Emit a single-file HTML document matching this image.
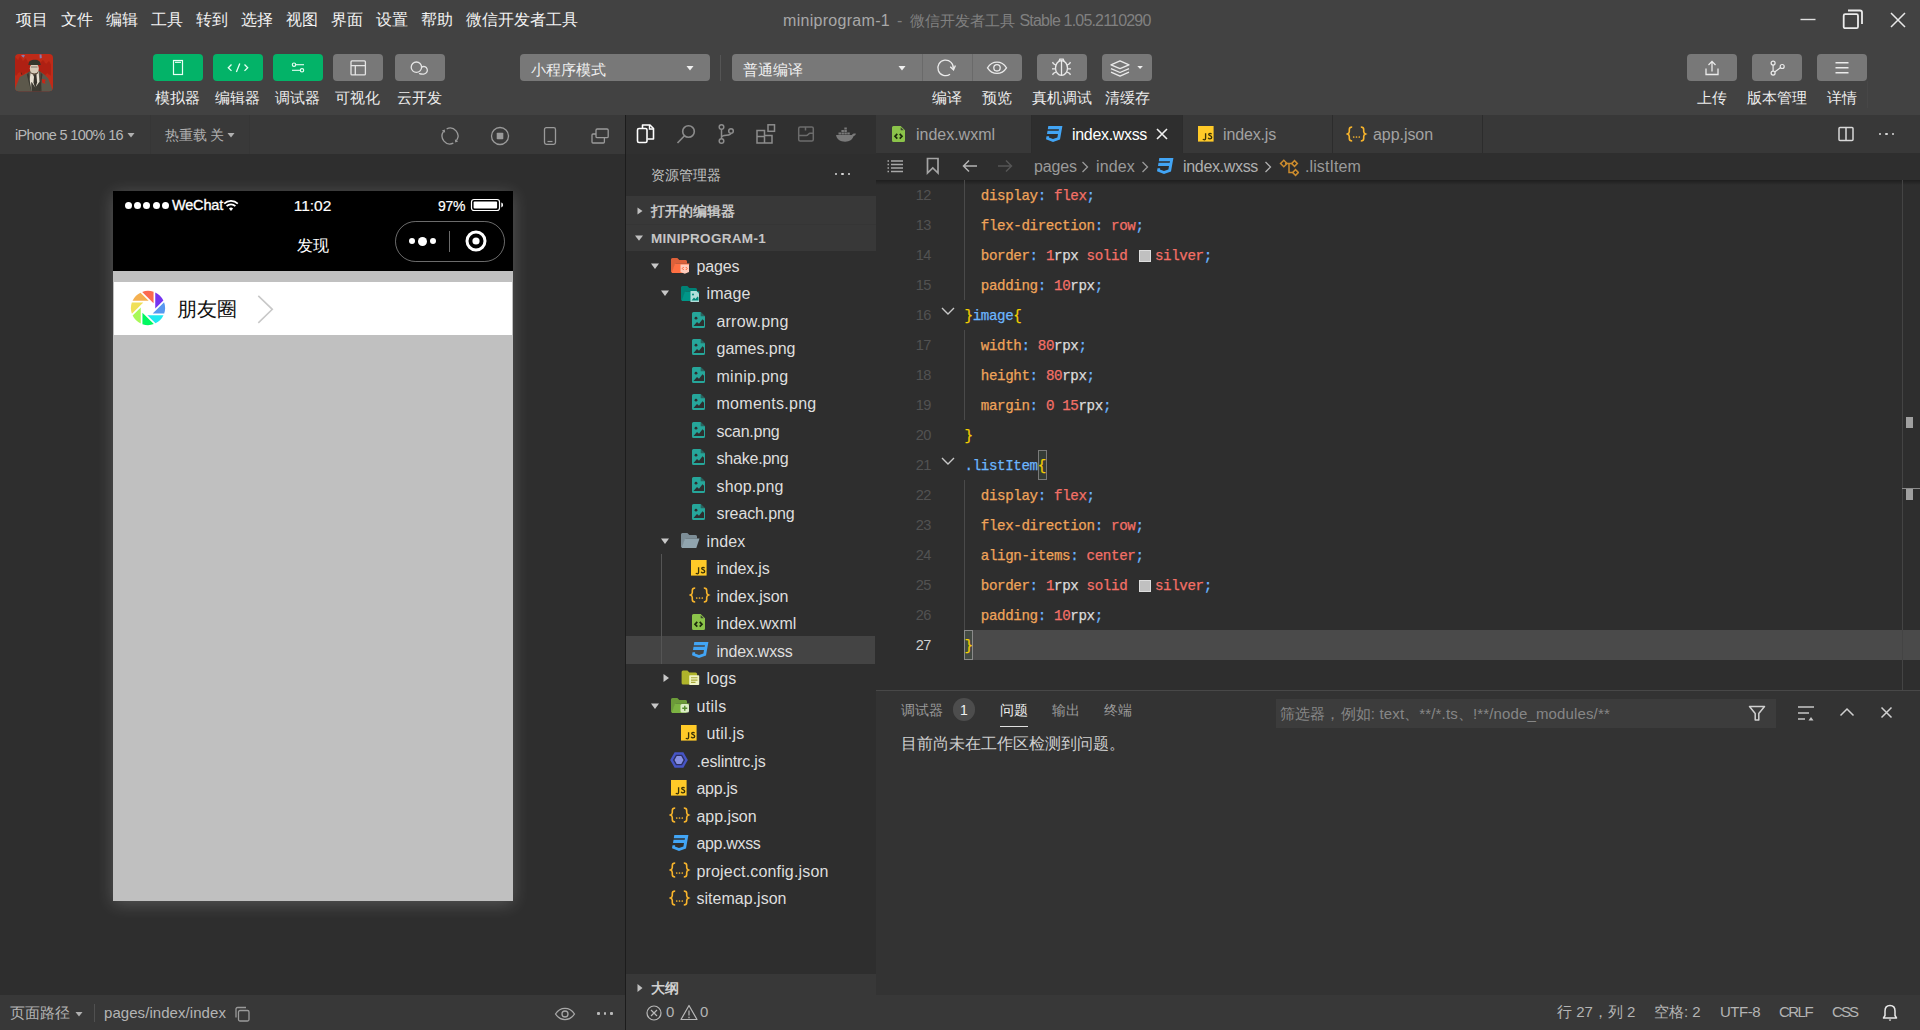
<!DOCTYPE html>
<html><head><meta charset="utf-8"><title>miniprogram-1</title>
<style>
html,body{margin:0;padding:0;}
body{width:1920px;height:1030px;overflow:hidden;background:#2e2e2e;position:relative;font-family:"Liberation Sans",sans-serif;}
.r{position:absolute;display:block;}
.t{position:absolute;white-space:nowrap;}
.m{font-family:"Liberation Mono",monospace;}
.c{transform:translateX(-50%);}
</style></head><body>
<div class="r" style="left:0px;top:0px;width:1920px;height:115px;background:#424242;"></div>
<div class="r" style="left:0px;top:115px;width:625px;height:39px;background:#393939;"></div>
<div class="r" style="left:0px;top:154px;width:625px;height:841px;background:#2e2e2e;"></div>
<div class="r" style="left:626px;top:115px;width:250px;height:880px;background:#2e2e2e;"></div>
<div class="r" style="left:626px;top:115px;width:250px;height:38.5px;background:#303030;"></div>
<div class="r" style="left:625px;top:115px;width:1.4px;height:915px;background:#1c1c1c;"></div>
<div class="r" style="left:876px;top:115px;width:1044px;height:38px;background:#383838;"></div>
<div class="r" style="left:876px;top:153px;width:1044px;height:27px;background:#2e2e2e;"></div>
<div class="r" style="left:876px;top:180px;width:1044px;height:510px;background:#2e2e2e;"></div>
<div class="r" style="left:876px;top:690px;width:1044px;height:305px;background:#333333;"></div>
<div class="r" style="left:0px;top:995px;width:1920px;height:35px;background:#383838;"></div>
<div class="r" style="left:625px;top:115px;width:1.4px;height:915px;background:#1c1c1c;"></div>
<div class="t " style="left:16px;top:9.00px;height:22px;line-height:22px;font-size:15.6px;color:#f2f2f2;">项目</div>
<div class="t " style="left:61px;top:9.00px;height:22px;line-height:22px;font-size:15.6px;color:#f2f2f2;">文件</div>
<div class="t " style="left:106px;top:9.00px;height:22px;line-height:22px;font-size:15.6px;color:#f2f2f2;">编辑</div>
<div class="t " style="left:151px;top:9.00px;height:22px;line-height:22px;font-size:15.6px;color:#f2f2f2;">工具</div>
<div class="t " style="left:196px;top:9.00px;height:22px;line-height:22px;font-size:15.6px;color:#f2f2f2;">转到</div>
<div class="t " style="left:241px;top:9.00px;height:22px;line-height:22px;font-size:15.6px;color:#f2f2f2;">选择</div>
<div class="t " style="left:286px;top:9.00px;height:22px;line-height:22px;font-size:15.6px;color:#f2f2f2;">视图</div>
<div class="t " style="left:331px;top:9.00px;height:22px;line-height:22px;font-size:15.6px;color:#f2f2f2;">界面</div>
<div class="t " style="left:376px;top:9.00px;height:22px;line-height:22px;font-size:15.6px;color:#f2f2f2;">设置</div>
<div class="t " style="left:421px;top:9.00px;height:22px;line-height:22px;font-size:15.6px;color:#f2f2f2;">帮助</div>
<div class="t " style="left:466px;top:9.00px;height:22px;line-height:22px;font-size:15.6px;color:#f2f2f2;">微信开发者工具</div>
<div class="t " style="left:783px;top:9.50px;height:22px;line-height:22px;font-size:16px;color:#a8a8a8;letter-spacing:0.297px;">miniprogram-1</div>
<div class="t " style="left:897px;top:9.50px;height:22px;line-height:22px;font-size:16px;color:#808080;">-</div>
<div class="t " style="left:910px;top:10.30px;height:21px;line-height:21px;font-size:15px;color:#808080;">微信开发者工具</div>
<div class="t " style="left:1019.5px;top:9.50px;height:22px;line-height:22px;font-size:16px;color:#808080;letter-spacing:-0.816px;">Stable 1.05.2110290</div>
<svg class="r" style="left:1796px;top:8px;" width="24" height="24" viewBox="0 0 24 24"><path d="M4.5 11.5H19.5" stroke="#e0e0e0" stroke-width="1.4" fill="none"/></svg>
<svg class="r" style="left:1839px;top:5px;" width="28" height="28" viewBox="0 0 28 28"><rect x="4.700" y="9.200" width="14.300" height="14" rx="1.500" fill="none" stroke="#ececec" stroke-width="1.800"/><path d="M9 5.500h12a2 2 0 0 1 2 2v11.500" fill="none" stroke="#ececec" stroke-width="1.800"/></svg>
<svg class="r" style="left:1885.8px;top:7.5px;" width="24" height="24" viewBox="0 0 24 24"><path d="M5 5L19 19M19 5L5 19" stroke="#e8e8e8" stroke-width="1.5" fill="none"/></svg>
<div class="r" style="left:1867px;top:81px;width:1px;height:27px;background:#474747;"></div>
<svg class="r" style="left:15px;top:54px;" width="38" height="38" viewBox="0 0 38 38"><defs><clipPath id="av"><rect width="38" height="37.300" rx="4"/></clipPath>
<filter id="avb" x="-10%" y="-10%" width="120%" height="120%"><feGaussianBlur stdDeviation=".45"/></filter></defs>
<g clip-path="url(#av)"><rect width="38" height="38" fill="#bf2a18"/>
<g filter="url(#avb)">
<path d="M0 3l3 3 2-4 3 5 3-3 2 4 3-2 3 3 3-4 3 4 3-3 3 4 3-3 2 3v12l-4-3-3 4-4-5-3 3-4-4-3 5-4-4-3 3-4-3-3 4-2-3z" fill="#a8200f" opacity=".7"/>
<path d="M6 1.500l2-.8 2 .5-1.500 2.500zM24.500 .5h2l.3 3.500-2 .5z" fill="#7a8fd0" opacity=".8"/>
<path d="M-2 42l2.300-8 4.500-11 6.500-3.600 4.500-2.600 8 0 5.500 3.600 4 4 3.700 10 2.500 7.600z" fill="#5c594b"/>
<path d="M6.500 18l.8 2.500-.9.300z" fill="#2a2018"/>
<path d="M15.800 17l3.800 7 4-7 .8 11-2.800 10h-4.800l-2.200-12z" fill="#e6dfd0"/>
<path d="M19.200 20.600h2.200l.7 8-1.800 6-1.800-6z" fill="#35322a"/>
<path d="M17 28.500l3.300 5 3.600-5 2.300-1 .5 14.500h-10.200l-.3-14z" fill="#3c3a30"/>
<path d="M15.300 16.500l-3.500 4 4.200 16.500-2.500-19zM24 16.500l3.500 4-2.800 16.500 1-19z" fill="#3a3830"/>
<ellipse cx="19.300" cy="14.600" rx="4.500" ry="5.300" fill="#d6cbb8"/>
<path d="M15 17.200c2 3 6.500 3 8.500 0l-.6 2.200-3.600 1.200-3.700-1.200z" fill="#5a4838"/>
<path d="M16 12.400h6.500v1.200h-6.500z" fill="#4a4238" opacity=".5"/>
<path d="M13.600 9.800c0-5.500 11.900-5.500 11.900 0l.3 1.200h-12.500z" fill="#35342c"/>
<path d="M26.800 25l4.200.8-1.200 1.800.8 2.200-3.300-.8z" fill="#c82818"/>
</g></g></svg>
<div class="r" style="left:153px;top:54px;width:50px;height:27px;background:#03b368;border-radius:4px;"></div>
<svg class="r" style="left:153px;top:54px;" width="50" height="27" viewBox="0 0 50 27"><rect x="20.5" y="6.5" width="9" height="14" fill="none" stroke="#e8fff4" stroke-width="1.2"/><path d="M22 8.3h6" stroke="#e8fff4" stroke-width="1.2"/></svg>
<div class="t c" style="left:177.4px;top:87.00px;height:21px;line-height:21px;font-size:15px;color:#ededed;">模拟器</div>
<div class="r" style="left:213px;top:54px;width:50px;height:27px;background:#03b368;border-radius:4px;"></div>
<svg class="r" style="left:213px;top:54px;" width="50" height="27" viewBox="0 0 50 27"><path d="M18.5 10.5l-3.2 3.2 3.2 3.2M31.5 10.5l3.2 3.2-3.2 3.2M26.8 9.5l-3.4 8.4" fill="none" stroke="#e8fff4" stroke-width="1.3"/></svg>
<div class="t c" style="left:237.4px;top:87.00px;height:21px;line-height:21px;font-size:15px;color:#ededed;">编辑器</div>
<div class="r" style="left:273px;top:54px;width:50px;height:27px;background:#03b368;border-radius:4px;"></div>
<svg class="r" style="left:273px;top:54px;" width="50" height="27" viewBox="0 0 50 27"><circle cx="21" cy="10.7" r="1.7" fill="none" stroke="#e8fff4" stroke-width="1.1"/><path d="M22.7 10.7H31" stroke="#e8fff4" stroke-width="1.1"/><circle cx="29" cy="16.3" r="1.7" fill="none" stroke="#e8fff4" stroke-width="1.1"/><path d="M19 16.3h8.3" stroke="#e8fff4" stroke-width="1.1"/></svg>
<div class="t c" style="left:297.4px;top:87.00px;height:21px;line-height:21px;font-size:15px;color:#ededed;">调试器</div>
<div class="r" style="left:333px;top:54px;width:50px;height:27px;background:#787878;border-radius:4px;"></div>
<svg class="r" style="left:333px;top:54px;" width="50" height="27" viewBox="0 0 50 27"><rect x="18" y="6.900" width="14.400" height="14" rx="1" fill="none" stroke="#e4e4e4" stroke-width="1.3"/><path d="M18 11.600h14.400M22.300 11.600v9.300" stroke="#e4e4e4" stroke-width="1.3"/></svg>
<div class="t c" style="left:357.4px;top:87.00px;height:21px;line-height:21px;font-size:15px;color:#ededed;">可视化</div>
<div class="r" style="left:395px;top:54px;width:50px;height:27px;background:#787878;border-radius:4px;"></div>
<svg class="r" style="left:395px;top:54px;" width="50" height="27" viewBox="0 0 50 27"><circle cx="21.400" cy="13.200" r="5.200" fill="none" stroke="#e4e4e4" stroke-width="1.3"/><path d="M24.500 19.600c1.200.5 2.400.6 4.200.5a3.800 3.800 0 1 0-2.200-7" fill="none" stroke="#e4e4e4" stroke-width="1.3" stroke-linecap="round"/></svg>
<div class="t c" style="left:419.4px;top:87.00px;height:21px;line-height:21px;font-size:15px;color:#ededed;">云开发</div>
<div class="r" style="left:520px;top:54px;width:190px;height:27px;background:#787878;border-radius:4px;"></div>
<div class="t " style="left:530.5px;top:58.80px;height:21px;line-height:21px;font-size:15px;color:#efefef;">小程序模式</div>
<svg class="r" style="left:684px;top:63px;" width="12" height="10" viewBox="0 0 12 10"><path d="M2.5 3h7L6 7.5z" fill="#f0f0f0"/></svg>
<div class="r" style="left:720px;top:55px;width:1px;height:26px;background:#555;"></div>
<div class="r" style="left:732px;top:54px;width:290px;height:27px;background:#787878;border-radius:4px;"></div>
<div class="r" style="left:922px;top:54px;width:1px;height:27px;background:#6a6a6a;"></div>
<div class="r" style="left:972px;top:54px;width:1px;height:27px;background:#6a6a6a;"></div>
<div class="t " style="left:742.5px;top:58.80px;height:21px;line-height:21px;font-size:15px;color:#efefef;">普通编译</div>
<svg class="r" style="left:896px;top:63px;" width="12" height="10" viewBox="0 0 12 10"><path d="M2.5 3h7L6 7.5z" fill="#f0f0f0"/></svg>
<svg class="r" style="left:922px;top:54px;" width="50" height="27" viewBox="0 0 50 27"><path d="M28.050 20.250A7.750 7.750 0 1 1 31.300 14.800" fill="none" stroke="#eaeaea" stroke-width="1.3"/><path d="M28.200 12.800L31.500 15.800 33.400 11.500" fill="none" stroke="#eaeaea" stroke-width="1.3"/></svg>
<svg class="r" style="left:972px;top:54px;" width="50" height="27" viewBox="0 0 50 27"><path d="M15.5 13.8c2.6-4 6-5.6 9.5-5.6s6.900 1.600 9.500 5.600c-2.600 4-6 5.600-9.500 5.600s-6.900-1.600-9.500-5.600z" fill="none" stroke="#eaeaea" stroke-width="1.3"/><circle cx="25" cy="13.800" r="3.200" fill="none" stroke="#eaeaea" stroke-width="1.3"/></svg>
<div class="t c" style="left:947px;top:87.00px;height:21px;line-height:21px;font-size:15px;color:#ededed;">编译</div>
<div class="t c" style="left:997px;top:87.00px;height:21px;line-height:21px;font-size:15px;color:#ededed;">预览</div>
<div class="r" style="left:1037px;top:54px;width:50px;height:27px;background:#787878;border-radius:4px;"></div>
<svg class="r" style="left:1037px;top:54px;" width="50" height="27" viewBox="0 0 50 27"><ellipse cx="24.500" cy="14" rx="6" ry="7.400" fill="none" stroke="#eaeaea" stroke-width="1.3"/><path d="M24.500 6.800v14.400M21.900 7.400l.9-2.200h3.400l.9 2.200M19 11.200l-2.700-1.600-.7-1.500M30 11.200l2.700-1.600.7-1.500M18.500 14.800H15M30.500 14.800H34M19 18l-2.700 1.400-.7 1.500M30 18l2.700 1.400.7 1.500" fill="none" stroke="#eaeaea" stroke-width="1.3"/></svg>
<div class="t c" style="left:1062px;top:87.00px;height:21px;line-height:21px;font-size:15px;color:#ededed;">真机调试</div>
<div class="r" style="left:1102px;top:54px;width:50px;height:27px;background:#787878;border-radius:4px;"></div>
<svg class="r" style="left:1102px;top:54px;" width="50" height="27" viewBox="0 0 50 27"><path d="M18 6.900l-9 3.900 9 3.900 9-3.900zM9 14.600l9 3.900 9-3.900M9 18.200l9 3.900 9-3.900" fill="none" stroke="#eaeaea" stroke-width="1.3" stroke-linejoin="round"/><path d="M35.300 12h5.600l-2.800 3z" fill="#f0f0f0"/></svg>
<div class="t c" style="left:1127px;top:87.00px;height:21px;line-height:21px;font-size:15px;color:#ededed;">清缓存</div>
<div class="r" style="left:1687px;top:54px;width:50px;height:27px;background:#787878;border-radius:4px;"></div>
<svg class="r" style="left:1687px;top:54px;" width="50" height="27" viewBox="0 0 50 27"><path d="M25 17.500V7.500M21.500 11l3.500-3.600 3.500 3.600M19 14.500v6h12v-6" fill="none" stroke="#eaeaea" stroke-width="1.3"/></svg>
<div class="t c" style="left:1712px;top:87.00px;height:21px;line-height:21px;font-size:15px;color:#ededed;">上传</div>
<div class="r" style="left:1752px;top:54px;width:50px;height:27px;background:#787878;border-radius:4px;"></div>
<svg class="r" style="left:1752px;top:54px;" width="50" height="27" viewBox="0 0 50 27"><circle cx="21.100" cy="9.100" r="2" fill="none" stroke="#eaeaea" stroke-width="1.200"/><circle cx="21.100" cy="19.100" r="2" fill="none" stroke="#eaeaea" stroke-width="1.200"/><circle cx="30.200" cy="12.500" r="2" fill="none" stroke="#eaeaea" stroke-width="1.200"/><path d="M21.100 11.100v6M22.700 17.900l5.900-4.300" fill="none" stroke="#eaeaea" stroke-width="1.200"/></svg>
<div class="t c" style="left:1777px;top:87.00px;height:21px;line-height:21px;font-size:15px;color:#ededed;">版本管理</div>
<div class="r" style="left:1817px;top:54px;width:50px;height:27px;background:#787878;border-radius:4px;"></div>
<svg class="r" style="left:1817px;top:54px;" width="50" height="27" viewBox="0 0 50 27"><path d="M18.500 8.800h13M18.500 13.800h13M18.500 18.800h13" stroke="#eaeaea" stroke-width="1.4"/></svg>
<div class="t c" style="left:1842px;top:87.00px;height:21px;line-height:21px;font-size:15px;color:#ededed;">详情</div>
<div class="t " style="left:15px;top:125.00px;height:20px;line-height:20px;font-size:14.5px;color:#b8b8b8;letter-spacing:-0.657px;">iPhone 5 100% 16</div>
<svg class="r" style="left:126px;top:131px;" width="10" height="8" viewBox="0 0 10 8"><path d="M1.500 2h7L5 6.500z" fill="#b0b0b0"/></svg>
<div class="r" style="left:150px;top:115px;width:1px;height:39px;background:#363636;"></div>
<div class="t " style="left:165px;top:125.50px;height:19px;line-height:19px;font-size:13.8px;color:#b0b0b0;">热重载</div>
<div class="t " style="left:210px;top:125.50px;height:19px;line-height:19px;font-size:13.8px;color:#b0b0b0;">关</div>
<svg class="r" style="left:226px;top:131px;" width="10" height="8" viewBox="0 0 10 8"><path d="M1.500 2h7L5 6.500z" fill="#b0b0b0"/></svg>
<div class="r" style="left:249px;top:115px;width:1px;height:39px;background:#363636;"></div>
<svg class="r" style="left:438.1px;top:124.1px;" width="24" height="24" viewBox="0 0 24 24"><path d="M8.660 4.840A7.900 7.900 0 0 1 18.470 16.530M15.340 19.160A7.900 7.900 0 0 1 5.530 7.470" fill="none" stroke="#9a9a9a" stroke-width="1.3"/><path d="M17.200 18.500L20.100 17.500 16.900 15.300zM6.800 5.500L3.900 6.500 7.100 8.700z" fill="#9a9a9a"/></svg>
<svg class="r" style="left:488px;top:124px;" width="24" height="24" viewBox="0 0 24 24"><circle cx="12" cy="12" r="8.500" fill="none" stroke="#9a9a9a" stroke-width="1.3"/><rect x="8.700" y="8.700" width="6.600" height="6.600" rx=".8" fill="#9a9a9a"/></svg>
<svg class="r" style="left:538px;top:124px;" width="24" height="24" viewBox="0 0 24 24"><rect x="6.500" y="3.700" width="11" height="16.600" rx="1.800" fill="none" stroke="#9a9a9a" stroke-width="1.3"/><path d="M9.500 17.500h5" stroke="#9a9a9a" stroke-width="1.2"/></svg>
<svg class="r" style="left:588px;top:124px;" width="24" height="24" viewBox="0 0 24 24"><rect x="8" y="5" width="12.200" height="8.700" rx="1.200" fill="none" stroke="#9a9a9a" stroke-width="1.3"/><path d="M8 10h-3a1 1 0 0 0-1 1v7a1 1 0 0 0 1 1h10.400a1 1 0 0 0 1-1v-4.300" fill="none" stroke="#9a9a9a" stroke-width="1.3"/></svg>
<div class="r" style="left:113px;top:191px;width:400px;height:710px;background:#000;box-shadow:0 3px 16px rgba(255,255,255,.2);"></div>
<div class="r" style="left:113px;top:191px;width:400px;height:80px;background:#000;"></div>
<div class="r" style="left:113px;top:271px;width:400px;height:630px;background:#c0c0c0;"></div>
<div class="r" style="left:125.0px;top:201.5px;width:7px;height:7px;background:#fff;border-radius:50%;"></div>
<div class="r" style="left:134.2px;top:201.5px;width:7px;height:7px;background:#fff;border-radius:50%;"></div>
<div class="r" style="left:143.4px;top:201.5px;width:7px;height:7px;background:#fff;border-radius:50%;"></div>
<div class="r" style="left:152.6px;top:201.5px;width:7px;height:7px;background:#fff;border-radius:50%;"></div>
<div class="r" style="left:161.8px;top:201.5px;width:7px;height:7px;background:#fff;border-radius:50%;"></div>
<div class="t " style="left:172px;top:195.00px;height:20px;line-height:20px;font-size:14.5px;color:#fff;letter-spacing:-0.186px;-webkit-text-stroke:.3px #fff;">WeChat</div>
<svg class="r" style="left:223px;top:198px;" width="16" height="14" viewBox="0 0 16 14"><path d="M1.200 5.600a9.600 9.600 0 0 1 13.600 0" fill="none" stroke="#fff" stroke-width="1.700"/><path d="M3.600 8.200a6.200 6.200 0 0 1 8.800 0" fill="none" stroke="#fff" stroke-width="1.700"/><path d="M5.900 10.600a3 3 0 0 1 4.200 0L8 12.900z" fill="#fff"/></svg>
<div class="t c" style="left:312.5px;top:194.50px;height:22px;line-height:22px;font-size:15.5px;color:#fff;-webkit-text-stroke:.2px #fff;">11:02</div>
<div class="t " style="left:438px;top:196.00px;height:20px;line-height:20px;font-size:14px;color:#fff;letter-spacing:-0.340px;-webkit-text-stroke:.2px #fff;">97%</div>
<svg class="r" style="left:470px;top:198px;" width="36" height="15" viewBox="0 0 36 15"><rect x="1.500" y="1.500" width="28" height="11" rx="2.500" fill="none" stroke="#fff" stroke-width="1.200"/><rect x="3.600" y="3.600" width="23.500" height="6.800" rx="1" fill="#fff"/><path d="M31.300 4.600a2.500 2.500 0 0 1 0 4.800z" fill="#fff"/></svg>
<div class="t c" style="left:312.5px;top:234.50px;height:22px;line-height:22px;font-size:16px;color:#fff;">发现</div>
<div class="r" style="left:395px;top:221px;width:108px;height:39px;background:transparent;border:1px solid rgba(255,255,255,.42);border-radius:21px;"></div>
<div class="r" style="left:409px;top:238px;width:6px;height:6px;background:#fff;border-radius:50%;"></div>
<div class="r" style="left:418px;top:236.5px;width:9px;height:9px;background:#fff;border-radius:50%;"></div>
<div class="r" style="left:430px;top:238px;width:6px;height:6px;background:#fff;border-radius:50%;"></div>
<div class="r" style="left:449px;top:230.5px;width:1px;height:21px;background:rgba(255,255,255,.42);"></div>
<svg class="r" style="left:464.3px;top:229.4px;" width="24" height="24" viewBox="0 0 24 24"><circle cx="12" cy="12" r="9" fill="none" stroke="#fff" stroke-width="3"/><circle cx="12" cy="12" r="3.600" fill="#fff"/></svg>
<div class="r" style="left:114px;top:282px;width:398px;height:53px;background:#fff;"></div>
<svg class="r" style="left:130px;top:290.2px;" width="36" height="36" viewBox="-18 -18 36 36"><path d="M7.25 -15.49A17.1 17.1 0 0 1 15.36 -7.51L7.25 0.60z" fill="#7534f0"/><path d="M16.08 -5.82A17.1 17.1 0 0 1 16.17 5.55L4.70 5.55z" fill="#5898f0"/><path d="M15.49 7.25A17.1 17.1 0 0 1 7.51 15.36L-0.60 7.25z" fill="#20e8f0"/><path d="M5.82 16.08A17.1 17.1 0 0 1 -5.55 16.17L-5.55 4.70z" fill="#00f860"/><path d="M-7.25 15.49A17.1 17.1 0 0 1 -15.36 7.51L-7.25 -0.60z" fill="#a8f858"/><path d="M-16.08 5.82A17.1 17.1 0 0 1 -16.17 -5.55L-4.70 -5.55z" fill="#f0e058"/><path d="M-15.49 -7.25A17.1 17.1 0 0 1 -7.51 -15.36L0.60 -7.25z" fill="#f4b050"/><path d="M-5.82 -16.08A17.1 17.1 0 0 1 5.55 -16.17L5.55 -4.70z" fill="#fb6a50"/></svg>
<div class="t " style="left:176.5px;top:294.60px;height:28px;line-height:28px;font-size:20px;color:#111;">朋友圈</div>
<svg class="r" style="left:255px;top:294px;" width="20" height="31" viewBox="0 0 20 31"><path d="M3.300 1.800L17.300 15.300 3.300 28.800" fill="none" stroke="#c8c8c8" stroke-width="1.600"/></svg>
<svg class="r" style="left:634px;top:122px;" width="24" height="24" viewBox="0 0 24 24"><path d="M8.500 6.500v-3.500h7.500l3.500 3.500v10.500h-6" fill="none" stroke="#fff" stroke-width="1.6" stroke-linejoin="round"/><path d="M15.500 3v4h4" fill="none" stroke="#fff" stroke-width="1.400"/><rect x="3.500" y="6.500" width="9.500" height="14" rx="1.500" fill="none" stroke="#fff" stroke-width="1.6"/></svg>
<svg class="r" style="left:674px;top:122px;" width="24" height="24" viewBox="0 0 24 24"><circle cx="14.500" cy="9.500" r="5.800" fill="none" stroke="#8c8c8c" stroke-width="1.6"/><path d="M10.500 13.700L3.500 21" stroke="#8c8c8c" stroke-width="1.600"/></svg>
<svg class="r" style="left:714px;top:122px;" width="24" height="24" viewBox="0 0 24 24"><circle cx="7.500" cy="5" r="2.300" fill="none" stroke="#8c8c8c" stroke-width="1.500"/><circle cx="7.500" cy="19" r="2.300" fill="none" stroke="#8c8c8c" stroke-width="1.500"/><circle cx="17" cy="9" r="2.300" fill="none" stroke="#8c8c8c" stroke-width="1.500"/><path d="M7.500 7.300v9.400M7.500 15.500c0-3.500 9.500-1 9.500-4.200" fill="none" stroke="#8c8c8c" stroke-width="1.500"/></svg>
<svg class="r" style="left:754px;top:122px;" width="24" height="24" viewBox="0 0 24 24"><path d="M3 8.500h7.500v12.500h-7.500zM10.500 13.500h7.500v7.500h-7.500M3 14.500h7.500" fill="none" stroke="#8c8c8c" stroke-width="1.500"/><rect x="14" y="2.800" width="6.500" height="6.500" fill="none" stroke="#8c8c8c" stroke-width="1.500"/></svg>
<svg class="r" style="left:794px;top:122px;" width="24" height="24" viewBox="0 0 24 24"><rect x="4.700" y="5" width="14.600" height="14" rx="1.500" fill="none" stroke="#6c6c6c" stroke-width="1.500"/><path d="M4.700 13.500h7.500c2 0 2.300-2.300 3.800-2.300h3.300M11.500 5v3.500" fill="none" stroke="#6c6c6c" stroke-width="1.500"/></svg>
<svg class="r" style="left:834px;top:124.5px;" width="24" height="20" viewBox="0 0 28 24"><path d="M2 12h19c1.500-1.800 3-2 5-1.500-.5 1.500-1.500 2.500-3 3-1.500 4-4.500 6.500-10 6.500-6 0-10-2.500-11-8z" fill="#7a7a7a"/><path d="M5 9h3v2.500h-3zM8.500 9h3v2.500h-3zM12 9h3v2.500h-3zM8.500 6h3v2.500h-3zM12 6h3v2.500h-3zM12 3h3v2.500h-3zM15.500 9h3v2.500h-3z" fill="#7a7a7a"/></svg>
<div class="t " style="left:651px;top:165.50px;height:19px;line-height:19px;font-size:13.5px;color:#c4c4c4;">资源管理器</div>
<div class="r" style="left:835.0px;top:172.8px;width:2.4px;height:2.4px;background:#d8d8d8;border-radius:1px;"></div>
<div class="r" style="left:841.3px;top:172.8px;width:2.4px;height:2.4px;background:#d8d8d8;border-radius:1px;"></div>
<div class="r" style="left:847.5999999999999px;top:172.8px;width:2.4px;height:2.4px;background:#d8d8d8;border-radius:1px;"></div>
<div class="r" style="left:626px;top:196px;width:250px;height:55px;background:#383838;"></div>
<div class="r" style="left:626px;top:223.5px;width:250px;height:1px;background:#353535;"></div>
<svg class="r" style="left:634px;top:205px;" width="12" height="12" viewBox="0 0 12 12"><path d="M3.500 2.500L8.500 6 3.500 9.500z" fill="#c0c0c0"/></svg>
<div class="t " style="left:651px;top:201.70px;height:19px;line-height:19px;font-size:13.5px;color:#c6c6c6;font-weight:bold;">打开的编辑器</div>
<svg class="r" style="left:633px;top:232px;" width="12" height="12" viewBox="0 0 12 12"><path d="M2 3.500h8L6 8.800z" fill="#c0c0c0"/></svg>
<div class="t " style="left:651px;top:228.70px;height:19px;line-height:19px;font-size:13.5px;color:#c6c6c6;font-weight:bold;letter-spacing:0.308px;">MINIPROGRAM-1</div>
<div class="r" style="left:626px;top:636px;width:249px;height:28px;background:#444444;"></div>
<div class="r" style="left:661px;top:553.8px;width:1px;height:110.0px;background:#555;"></div>
<svg class="r" style="left:650px;top:260.8px;" width="10" height="10" viewBox="0 0 10 10"><path d="M1 2.500h8L5 8z" fill="#c8c8c8"/></svg>
<svg class="r" style="left:670.5px;top:257.1px;" width="22" height="19" viewBox="0 0 22 19"><path d="M0 2.500a1.500 1.500 0 0 1 1.500-1.500h4.800l2 2h6.200a1.500 1.500 0 0 1 1.500 1.500v2h-11.500l-3 8.500h-1.500z" fill="#ff7043"/><path d="M0 2.500a1.500 1.500 0 0 1 1.500-1.500h4.800l2 2h6.200a1.500 1.500 0 0 1 1.500 1.500v2h-11.500l-3 8.500h-1.500z" fill="#000" opacity=".13"/><path d="M4 6.500h14.500l-3.200 9.500h-14.800z" fill="#ff7043"/><path d="M9.500 7.500h8.500v7.500l-4.200 1.800-4.300-1.800z" fill="#ffccbc"/><path d="M12.700 10l-1.400 1.500 1.400 1.500M14.800 10l1.400 1.500-1.400 1.500" fill="none" stroke="#ff5722" stroke-width=".9"/></svg>
<div class="t " style="left:696.5px;top:255.60px;height:22px;line-height:22px;font-size:16px;color:#dedede;letter-spacing:-0.119px;">pages</div>
<svg class="r" style="left:660px;top:288.3px;" width="10" height="10" viewBox="0 0 10 10"><path d="M1 2.500h8L5 8z" fill="#c8c8c8"/></svg>
<svg class="r" style="left:680.5px;top:284.6px;" width="22" height="19" viewBox="0 0 22 19"><path d="M0 2.500a1.500 1.500 0 0 1 1.500-1.500h4.800l2 2h6.200a1.500 1.500 0 0 1 1.500 1.500v2h-11.500l-3 8.500h-1.500z" fill="#009688"/><path d="M0 2.500a1.500 1.500 0 0 1 1.500-1.500h4.800l2 2h6.200a1.500 1.500 0 0 1 1.500 1.500v2h-11.500l-3 8.500h-1.500z" fill="#000" opacity=".13"/><path d="M4 6.500h14.500l-3.200 9.500h-14.800z" fill="#009688"/><path d="M9.500 6h6l2.500 2.500v8.500h-8.500z" fill="#b2dfdb"/><path d="M10.500 15.500l2.500-3 1.500 1.500 2-2.500 1 1v3z" fill="#00897b"/><circle cx="12" cy="9.500" r="1" fill="#00897b"/></svg>
<div class="t " style="left:706.5px;top:283.10px;height:22px;line-height:22px;font-size:16px;color:#dedede;letter-spacing:0.084px;">image</div>
<svg class="r" style="left:691.9px;top:310.7px;" width="14" height="18" viewBox="0 0 14 18"><path d="M1.500 1h7.200L13 5.300V15.500a1.500 1.500 0 0 1-1.500 1.500h-10A1.500 1.500 0 0 1 0 15.500v-13A1.500 1.500 0 0 1 1.500 1z" fill="#26a69a"/><path d="M8.700 1v4.300H13z" fill="#2e2e2e" opacity=".55"/><circle cx="4" cy="7.200" r="1.400" fill="#2e2e2e"/><path d="M1.500 15l3.500-4 2 1.800 3.500-4.500 1.500 1.500V15z" fill="#2e2e2e"/></svg>
<div class="t " style="left:716.5px;top:310.60px;height:22px;line-height:22px;font-size:16px;color:#dedede;letter-spacing:0.193px;">arrow.png</div>
<svg class="r" style="left:691.9px;top:338.2px;" width="14" height="18" viewBox="0 0 14 18"><path d="M1.500 1h7.200L13 5.300V15.500a1.500 1.500 0 0 1-1.500 1.500h-10A1.500 1.500 0 0 1 0 15.500v-13A1.500 1.500 0 0 1 1.500 1z" fill="#26a69a"/><path d="M8.700 1v4.300H13z" fill="#2e2e2e" opacity=".55"/><circle cx="4" cy="7.200" r="1.400" fill="#2e2e2e"/><path d="M1.500 15l3.500-4 2 1.800 3.500-4.500 1.500 1.500V15z" fill="#2e2e2e"/></svg>
<div class="t " style="left:716.5px;top:338.10px;height:22px;line-height:22px;font-size:16px;color:#dedede;letter-spacing:-0.018px;">games.png</div>
<svg class="r" style="left:691.9px;top:365.7px;" width="14" height="18" viewBox="0 0 14 18"><path d="M1.500 1h7.200L13 5.300V15.500a1.500 1.500 0 0 1-1.500 1.500h-10A1.500 1.500 0 0 1 0 15.500v-13A1.500 1.500 0 0 1 1.500 1z" fill="#26a69a"/><path d="M8.700 1v4.300H13z" fill="#2e2e2e" opacity=".55"/><circle cx="4" cy="7.200" r="1.400" fill="#2e2e2e"/><path d="M1.500 15l3.500-4 2 1.800 3.500-4.500 1.500 1.500V15z" fill="#2e2e2e"/></svg>
<div class="t " style="left:716.5px;top:365.60px;height:22px;line-height:22px;font-size:16px;color:#dedede;letter-spacing:0.292px;">minip.png</div>
<svg class="r" style="left:691.9px;top:393.2px;" width="14" height="18" viewBox="0 0 14 18"><path d="M1.500 1h7.200L13 5.300V15.500a1.500 1.500 0 0 1-1.500 1.500h-10A1.500 1.500 0 0 1 0 15.500v-13A1.500 1.500 0 0 1 1.500 1z" fill="#26a69a"/><path d="M8.700 1v4.300H13z" fill="#2e2e2e" opacity=".55"/><circle cx="4" cy="7.200" r="1.400" fill="#2e2e2e"/><path d="M1.500 15l3.500-4 2 1.800 3.500-4.500 1.500 1.500V15z" fill="#2e2e2e"/></svg>
<div class="t " style="left:716.5px;top:393.10px;height:22px;line-height:22px;font-size:16px;color:#dedede;letter-spacing:0.278px;">moments.png</div>
<svg class="r" style="left:691.9px;top:420.7px;" width="14" height="18" viewBox="0 0 14 18"><path d="M1.500 1h7.200L13 5.300V15.500a1.500 1.500 0 0 1-1.500 1.500h-10A1.500 1.500 0 0 1 0 15.500v-13A1.500 1.500 0 0 1 1.500 1z" fill="#26a69a"/><path d="M8.700 1v4.300H13z" fill="#2e2e2e" opacity=".55"/><circle cx="4" cy="7.200" r="1.400" fill="#2e2e2e"/><path d="M1.500 15l3.500-4 2 1.800 3.500-4.500 1.500 1.500V15z" fill="#2e2e2e"/></svg>
<div class="t " style="left:716.5px;top:420.60px;height:22px;line-height:22px;font-size:16px;color:#dedede;letter-spacing:-0.242px;">scan.png</div>
<svg class="r" style="left:691.9px;top:448.2px;" width="14" height="18" viewBox="0 0 14 18"><path d="M1.500 1h7.200L13 5.300V15.500a1.500 1.500 0 0 1-1.500 1.500h-10A1.500 1.500 0 0 1 0 15.500v-13A1.500 1.500 0 0 1 1.500 1z" fill="#26a69a"/><path d="M8.700 1v4.300H13z" fill="#2e2e2e" opacity=".55"/><circle cx="4" cy="7.200" r="1.400" fill="#2e2e2e"/><path d="M1.500 15l3.500-4 2 1.800 3.500-4.500 1.500 1.500V15z" fill="#2e2e2e"/></svg>
<div class="t " style="left:716.5px;top:448.10px;height:22px;line-height:22px;font-size:16px;color:#dedede;letter-spacing:-0.204px;">shake.png</div>
<svg class="r" style="left:691.9px;top:475.7px;" width="14" height="18" viewBox="0 0 14 18"><path d="M1.500 1h7.200L13 5.300V15.500a1.500 1.500 0 0 1-1.500 1.500h-10A1.500 1.500 0 0 1 0 15.500v-13A1.500 1.500 0 0 1 1.500 1z" fill="#26a69a"/><path d="M8.700 1v4.300H13z" fill="#2e2e2e" opacity=".55"/><circle cx="4" cy="7.200" r="1.400" fill="#2e2e2e"/><path d="M1.500 15l3.500-4 2 1.800 3.500-4.500 1.500 1.500V15z" fill="#2e2e2e"/></svg>
<div class="t " style="left:716.5px;top:475.60px;height:22px;line-height:22px;font-size:16px;color:#dedede;letter-spacing:0.145px;">shop.png</div>
<svg class="r" style="left:691.9px;top:503.19999999999993px;" width="14" height="18" viewBox="0 0 14 18"><path d="M1.500 1h7.200L13 5.300V15.500a1.500 1.500 0 0 1-1.500 1.500h-10A1.500 1.500 0 0 1 0 15.500v-13A1.500 1.500 0 0 1 1.500 1z" fill="#26a69a"/><path d="M8.700 1v4.300H13z" fill="#2e2e2e" opacity=".55"/><circle cx="4" cy="7.200" r="1.400" fill="#2e2e2e"/><path d="M1.500 15l3.500-4 2 1.800 3.500-4.500 1.500 1.500V15z" fill="#2e2e2e"/></svg>
<div class="t " style="left:716.5px;top:503.10px;height:22px;line-height:22px;font-size:16px;color:#dedede;letter-spacing:-0.116px;">sreach.png</div>
<svg class="r" style="left:660px;top:535.8px;" width="10" height="10" viewBox="0 0 10 10"><path d="M1 2.500h8L5 8z" fill="#c8c8c8"/></svg>
<svg class="r" style="left:680.5px;top:532.0999999999999px;" width="22" height="19" viewBox="0 0 22 19"><path d="M0 2.500a1.500 1.500 0 0 1 1.500-1.500h4.800l2 2h6.200a1.500 1.500 0 0 1 1.500 1.500v2h-11.500l-3 8.500h-1.500z" fill="#90a4ae"/><path d="M0 2.500a1.500 1.500 0 0 1 1.500-1.500h4.800l2 2h6.200a1.500 1.500 0 0 1 1.500 1.500v2h-11.500l-3 8.500h-1.500z" fill="#000" opacity=".13"/><path d="M4 6.500h14.500l-3.200 9.500h-14.800z" fill="#90a4ae"/></svg>
<div class="t " style="left:706.5px;top:530.60px;height:22px;line-height:22px;font-size:16px;color:#dedede;letter-spacing:0.150px;">index</div>
<svg class="r" style="left:690.9px;top:559.8px;" width="16" height="16" viewBox="0 0 16 16"><rect x="0" y="0" width="15.600" height="15.600" fill="#ffca28"/><path d="M7.600 7.300v5c0 1-.5 1.500-1.300 1.500-.7 0-1.100-.3-1.400-.8M13.500 8.200c-.3-.6-.8-.9-1.500-.9-.8 0-1.300.4-1.300 1.100 0 1.600 3 1 3 2.900 0 .9-.7 1.500-1.700 1.500-.9 0-1.500-.4-1.800-1.100" fill="none" stroke="#3a3208" stroke-width="1.350"/></svg>
<div class="t " style="left:716.5px;top:558.10px;height:22px;line-height:22px;font-size:16px;color:#dedede;letter-spacing:-0.156px;">index.js</div>
<svg class="r" style="left:688.7px;top:587.0px;" width="22" height="16" viewBox="0 0 22 16"><path d="M6.200 1c-2.200 0-2.900.8-2.900 2.400v2.200c0 1.100-.6 1.900-1.800 2.400 1.200.5 1.800 1.300 1.800 2.400v2.200c0 1.600.7 2.400 2.900 2.400M14.800 1c2.200 0 2.900.8 2.900 2.400v2.200c0 1.100.6 1.900 1.800 2.400-1.200.5-1.800 1.300-1.800 2.400v2.200c0 1.600-.7 2.400-2.900 2.400" fill="none" stroke="#f9b52c" stroke-width="1.600"/><circle cx="7.700" cy="11" r=".85" fill="#f9b52c"/><circle cx="10.500" cy="11" r=".85" fill="#f9b52c"/><circle cx="13.300" cy="11" r=".85" fill="#f9b52c"/></svg>
<div class="t " style="left:716.5px;top:585.60px;height:22px;line-height:22px;font-size:16px;color:#dedede;letter-spacing:-0.005px;">index.json</div>
<svg class="r" style="left:691.9px;top:613.1999999999999px;" width="14" height="18" viewBox="0 0 14 18"><path d="M1.500 1h7.200L13 5.300V15.500a1.500 1.500 0 0 1-1.500 1.500h-10A1.500 1.500 0 0 1 0 15.500v-13A1.500 1.500 0 0 1 1.500 1z" fill="#8bc34a"/><path d="M8.700 2.200v3.100h3.100z" fill="#2e2e2e" opacity=".85"/><path d="M5.300 8.900L3 11.300l2.300 2.400M7.700 8.900L10 11.300l-2.300 2.400" fill="none" stroke="#1c2a0c" stroke-width="1.700"/></svg>
<div class="t " style="left:716.5px;top:613.10px;height:22px;line-height:22px;font-size:16px;color:#dedede;letter-spacing:0.087px;">index.wxml</div>
<svg class="r" style="left:691.5px;top:642.3px;" width="17" height="17" viewBox="0 0 17 17"><path d="M2.300 0H16.400L14 13.500 7 16 0 13.200 .5 10.300H3.200L2.900 11.400 7 13 11.400 11.400 12 8H1L1.500 4.700H12.700L13 3.300H1.800z" fill="#42a5f5"/></svg>
<div class="t " style="left:716.5px;top:640.60px;height:22px;line-height:22px;font-size:16px;color:#dedede;letter-spacing:-0.225px;">index.wxss</div>
<svg class="r" style="left:661px;top:673.3px;" width="10" height="10" viewBox="0 0 10 10"><path d="M2.500 1L8 5 2.500 9z" fill="#c8c8c8"/></svg>
<svg class="r" style="left:680.5px;top:669.5999999999999px;" width="22" height="19" viewBox="0 0 22 19"><path d="M.6 1.900a1.500 1.500 0 0 1 1.500-1.500h4.300l2 2h6.200a1.500 1.500 0 0 1 1.500 1.500v9a1.500 1.500 0 0 1-1.500 1.500h-12.500a1.500 1.500 0 0 1-1.500-1.500z" fill="#afb42b"/><rect x="8.200" y="5.300" width="10" height="9.700" rx=".8" fill="#f0f4c3"/><path d="M10 7.800h6.500M10 10.100h6.500M10 12.400h4.500" stroke="#a8a838" stroke-width="1.100"/></svg>
<div class="t " style="left:706.5px;top:668.10px;height:22px;line-height:22px;font-size:16px;color:#dedede;letter-spacing:0.162px;">logs</div>
<svg class="r" style="left:650px;top:700.8px;" width="10" height="10" viewBox="0 0 10 10"><path d="M1 2.500h8L5 8z" fill="#c8c8c8"/></svg>
<svg class="r" style="left:670.5px;top:697.0999999999999px;" width="22" height="19" viewBox="0 0 22 19"><path d="M0 2.500a1.500 1.500 0 0 1 1.500-1.500h4.800l2 2h6.200a1.500 1.500 0 0 1 1.500 1.500v2h-11.500l-3 8.500h-1.500z" fill="#7cb342"/><path d="M0 2.500a1.500 1.500 0 0 1 1.500-1.500h4.800l2 2h6.200a1.500 1.500 0 0 1 1.500 1.500v2h-11.500l-3 8.500h-1.500z" fill="#000" opacity=".13"/><path d="M4 6.500h14.500l-3.200 9.500h-14.800z" fill="#7cb342"/><rect x="9.500" y="7" width="8.500" height="8.500" rx="1.500" fill="#dcedc8"/><path d="M13.750 8.800v5M11.250 11.300h5" stroke="#558b2f" stroke-width="1.400"/></svg>
<div class="t " style="left:696.5px;top:695.60px;height:22px;line-height:22px;font-size:16px;color:#dedede;letter-spacing:0.309px;">utils</div>
<svg class="r" style="left:680.9px;top:724.8px;" width="16" height="16" viewBox="0 0 16 16"><rect x="0" y="0" width="15.600" height="15.600" fill="#ffca28"/><path d="M7.600 7.300v5c0 1-.5 1.500-1.300 1.500-.7 0-1.100-.3-1.400-.8M13.500 8.200c-.3-.6-.8-.9-1.500-.9-.8 0-1.300.4-1.300 1.100 0 1.600 3 1 3 2.900 0 .9-.7 1.500-1.700 1.500-.9 0-1.500-.4-1.800-1.100" fill="none" stroke="#3a3208" stroke-width="1.350"/></svg>
<div class="t " style="left:706.5px;top:723.10px;height:22px;line-height:22px;font-size:16px;color:#dedede;letter-spacing:0.221px;">util.js</div>
<svg class="r" style="left:669.9px;top:752.3px;" width="19" height="16.5" viewBox="0 0 19 16.5"><polygon points="4.60,0.30 13.40,0.30 17.80,8.00 13.40,15.70 4.60,15.70 0.20,8.00" fill="#4655c6"/><polygon points="5.95,2.65 12.05,2.65 15.10,8.00 12.05,13.35 5.95,13.35 2.90,8.00" fill="#2b2e5e"/><polygon points="6.75,4.05 11.25,4.05 13.50,8.00 11.25,11.95 6.75,11.95 4.50,8.00" fill="#8790e4"/></svg>
<div class="t " style="left:696.5px;top:750.60px;height:22px;line-height:22px;font-size:16px;color:#dedede;letter-spacing:-0.177px;">.eslintrc.js</div>
<svg class="r" style="left:670.9px;top:779.8px;" width="16" height="16" viewBox="0 0 16 16"><rect x="0" y="0" width="15.600" height="15.600" fill="#ffca28"/><path d="M7.600 7.300v5c0 1-.5 1.500-1.300 1.500-.7 0-1.100-.3-1.400-.8M13.500 8.200c-.3-.6-.8-.9-1.500-.9-.8 0-1.300.4-1.300 1.100 0 1.600 3 1 3 2.900 0 .9-.7 1.500-1.700 1.500-.9 0-1.500-.4-1.800-1.100" fill="none" stroke="#3a3208" stroke-width="1.350"/></svg>
<div class="t " style="left:696.5px;top:778.10px;height:22px;line-height:22px;font-size:16px;color:#dedede;letter-spacing:-0.283px;">app.js</div>
<svg class="r" style="left:668.7px;top:807.0px;" width="22" height="16" viewBox="0 0 22 16"><path d="M6.200 1c-2.200 0-2.900.8-2.900 2.400v2.200c0 1.100-.6 1.900-1.800 2.400 1.200.5 1.800 1.300 1.800 2.400v2.200c0 1.600.7 2.400 2.900 2.400M14.800 1c2.200 0 2.900.8 2.900 2.400v2.200c0 1.100.6 1.900 1.800 2.400-1.200.5-1.800 1.300-1.800 2.400v2.200c0 1.600-.7 2.400-2.900 2.400" fill="none" stroke="#f9b52c" stroke-width="1.600"/><circle cx="7.700" cy="11" r=".85" fill="#f9b52c"/><circle cx="10.500" cy="11" r=".85" fill="#f9b52c"/><circle cx="13.300" cy="11" r=".85" fill="#f9b52c"/></svg>
<div class="t " style="left:696.5px;top:805.60px;height:22px;line-height:22px;font-size:16px;color:#dedede;letter-spacing:-0.062px;">app.json</div>
<svg class="r" style="left:671.5px;top:834.8px;" width="17" height="17" viewBox="0 0 17 17"><path d="M2.300 0H16.400L14 13.500 7 16 0 13.200 .5 10.300H3.200L2.900 11.400 7 13 11.400 11.400 12 8H1L1.500 4.700H12.700L13 3.300H1.800z" fill="#42a5f5"/></svg>
<div class="t " style="left:696.5px;top:833.10px;height:22px;line-height:22px;font-size:16px;color:#dedede;letter-spacing:-0.337px;">app.wxss</div>
<svg class="r" style="left:668.7px;top:862.0px;" width="22" height="16" viewBox="0 0 22 16"><path d="M6.200 1c-2.200 0-2.900.8-2.900 2.400v2.200c0 1.100-.6 1.900-1.800 2.400 1.200.5 1.800 1.300 1.800 2.400v2.200c0 1.600.7 2.400 2.900 2.400M14.800 1c2.200 0 2.900.8 2.900 2.400v2.200c0 1.100.6 1.900 1.800 2.400-1.200.5-1.800 1.300-1.800 2.400v2.200c0 1.600-.7 2.400-2.900 2.400" fill="none" stroke="#f9b52c" stroke-width="1.600"/><circle cx="7.700" cy="11" r=".85" fill="#f9b52c"/><circle cx="10.500" cy="11" r=".85" fill="#f9b52c"/><circle cx="13.300" cy="11" r=".85" fill="#f9b52c"/></svg>
<div class="t " style="left:696.5px;top:860.60px;height:22px;line-height:22px;font-size:16px;color:#dedede;letter-spacing:0.160px;">project.config.json</div>
<svg class="r" style="left:668.7px;top:889.5px;" width="22" height="16" viewBox="0 0 22 16"><path d="M6.200 1c-2.200 0-2.900.8-2.900 2.400v2.200c0 1.100-.6 1.900-1.800 2.400 1.200.5 1.800 1.300 1.800 2.400v2.200c0 1.600.7 2.400 2.900 2.400M14.800 1c2.200 0 2.900.8 2.900 2.400v2.200c0 1.100.6 1.900 1.800 2.400-1.200.5-1.800 1.300-1.800 2.400v2.200c0 1.600-.7 2.400-2.900 2.400" fill="none" stroke="#f9b52c" stroke-width="1.600"/><circle cx="7.700" cy="11" r=".85" fill="#f9b52c"/><circle cx="10.500" cy="11" r=".85" fill="#f9b52c"/><circle cx="13.300" cy="11" r=".85" fill="#f9b52c"/></svg>
<div class="t " style="left:696.5px;top:888.10px;height:22px;line-height:22px;font-size:16px;color:#dedede;letter-spacing:0.015px;">sitemap.json</div>
<div class="r" style="left:626px;top:974px;width:250px;height:21px;background:#383838;"></div>
<svg class="r" style="left:634px;top:982px;" width="12" height="12" viewBox="0 0 12 12"><path d="M3.500 2L8.500 6 3.500 10z" fill="#c0c0c0"/></svg>
<div class="t " style="left:651px;top:978.50px;height:19px;line-height:19px;font-size:13.5px;color:#d0d0d0;font-weight:bold;">大纲</div>
<div class="r" style="left:1031px;top:115px;width:152px;height:38px;background:#2e2e2e;"></div>
<div class="r" style="left:1031px;top:115px;width:1px;height:38px;background:#2c2c2c;"></div>
<div class="r" style="left:1182px;top:115px;width:1px;height:38px;background:#2c2c2c;"></div>
<div class="r" style="left:1332px;top:115px;width:1px;height:38px;background:#2c2c2c;"></div>
<div class="r" style="left:1482px;top:115px;width:1px;height:38px;background:#2c2c2c;"></div>
<svg class="r" style="left:892px;top:125px;" width="14" height="18" viewBox="0 0 14 18"><path d="M1.500 1h7.200L13 5.300V15.500a1.500 1.500 0 0 1-1.500 1.500h-10A1.500 1.500 0 0 1 0 15.500v-13A1.500 1.500 0 0 1 1.500 1z" fill="#8bc34a"/><path d="M8.700 2.200v3.100h3.100z" fill="#2e2e2e" opacity=".85"/><path d="M5.300 8.900L3 11.300l2.300 2.400M7.700 8.900L10 11.300l-2.300 2.400" fill="none" stroke="#1c2a0c" stroke-width="1.700"/></svg>
<div class="t " style="left:916px;top:123.50px;height:22px;line-height:22px;font-size:16px;color:#a2a2a2;letter-spacing:-0.013px;">index.wxml</div>
<svg class="r" style="left:1045.8px;top:126px;" width="17" height="17" viewBox="0 0 17 17"><path d="M2.300 0H16.400L14 13.500 7 16 0 13.200 .5 10.300H3.200L2.900 11.400 7 13 11.400 11.400 12 8H1L1.500 4.700H12.700L13 3.300H1.800z" fill="#42a5f5"/></svg>
<div class="t " style="left:1072px;top:123.50px;height:22px;line-height:22px;font-size:16px;color:#ffffff;letter-spacing:-0.325px;">index.wxss</div>
<svg class="r" style="left:1154px;top:126px;" width="16" height="16" viewBox="0 0 16 16"><path d="M3 3l10 10M13 3L3 13" stroke="#f0f0f0" stroke-width="1.600"/></svg>
<svg class="r" style="left:1198px;top:126px;" width="16" height="16" viewBox="0 0 16 16"><rect x="0" y="0" width="15.600" height="15.600" fill="#ffca28"/><path d="M7.600 7.300v5c0 1-.5 1.500-1.300 1.500-.7 0-1.100-.3-1.400-.8M13.500 8.200c-.3-.6-.8-.9-1.500-.9-.8 0-1.300.4-1.300 1.100 0 1.600 3 1 3 2.900 0 .9-.7 1.500-1.700 1.500-.9 0-1.500-.4-1.800-1.100" fill="none" stroke="#3a3208" stroke-width="1.350"/></svg>
<div class="t " style="left:1223px;top:123.50px;height:22px;line-height:22px;font-size:16px;color:#a2a2a2;letter-spacing:-0.156px;">index.js</div>
<svg class="r" style="left:1346px;top:126px;" width="22" height="16" viewBox="0 0 22 16"><path d="M6.200 1c-2.200 0-2.900.8-2.900 2.400v2.200c0 1.100-.6 1.900-1.800 2.400 1.200.5 1.800 1.300 1.800 2.400v2.200c0 1.600.7 2.400 2.900 2.400M14.800 1c2.200 0 2.900.8 2.900 2.400v2.200c0 1.100.6 1.900 1.800 2.400-1.200.5-1.800 1.300-1.800 2.400v2.200c0 1.600-.7 2.400-2.900 2.400" fill="none" stroke="#f9b52c" stroke-width="1.600"/><circle cx="7.700" cy="11" r=".85" fill="#f9b52c"/><circle cx="10.500" cy="11" r=".85" fill="#f9b52c"/><circle cx="13.300" cy="11" r=".85" fill="#f9b52c"/></svg>
<div class="t " style="left:1373px;top:123.50px;height:22px;line-height:22px;font-size:16px;color:#a2a2a2;letter-spacing:-0.062px;">app.json</div>
<svg class="r" style="left:1836px;top:124px;" width="20" height="20" viewBox="0 0 20 20"><rect x="3" y="3.500" width="14" height="13" rx="1" fill="none" stroke="#d8d8d8" stroke-width="1.500"/><path d="M10 3.500v13" stroke="#d8d8d8" stroke-width="1.500"/></svg>
<div class="r" style="left:1879.0px;top:132.8px;width:2.4px;height:2.4px;background:#d8d8d8;border-radius:1px;"></div>
<div class="r" style="left:1885.3px;top:132.8px;width:2.4px;height:2.4px;background:#d8d8d8;border-radius:1px;"></div>
<div class="r" style="left:1891.6px;top:132.8px;width:2.4px;height:2.4px;background:#d8d8d8;border-radius:1px;"></div>
<svg class="r" style="left:886px;top:156.8px;" width="20" height="18" viewBox="0 0 20 18"><path d="M1.500 4h1.500M5 4h12M1.500 7.500h1.500M5 7.500h12M1.500 11h1.500M5 11h12M1.500 14.500h1.500M5 14.500h12" stroke="#a8a8a8" stroke-width="1.500"/></svg>
<svg class="r" style="left:924px;top:155.8px;" width="18" height="20" viewBox="0 0 18 20"><path d="M3.500 2.500h10.500v14.500l-5.250-5-5.250 5z" fill="none" stroke="#a4a4a4" stroke-width="1.700"/></svg>
<svg class="r" style="left:960px;top:157px;" width="20" height="18" viewBox="0 0 20 18"><path d="M17 9H3.500M9 3.500L3.500 9 9 14.500" fill="none" stroke="#b4b4b4" stroke-width="1.500"/></svg>
<svg class="r" style="left:995px;top:157px;" width="20" height="18" viewBox="0 0 20 18"><path d="M3 9h13.500M11 3.500L16.500 9 11 14.500" fill="none" stroke="#555" stroke-width="1.500"/></svg>
<div class="t " style="left:1034px;top:156.10px;height:22px;line-height:22px;font-size:16px;color:#9a9a9a;letter-spacing:-0.119px;">pages</div>
<svg class="r" style="left:1080px;top:160px;" width="10" height="14" viewBox="0 0 10 14"><path d="M2.500 2L7.500 7 2.500 12" fill="none" stroke="#9a9a9a" stroke-width="1.300"/></svg>
<div class="t " style="left:1096px;top:156.10px;height:22px;line-height:22px;font-size:16px;color:#9a9a9a;letter-spacing:0.150px;">index</div>
<svg class="r" style="left:1140px;top:160px;" width="10" height="14" viewBox="0 0 10 14"><path d="M2.500 2L7.500 7 2.500 12" fill="none" stroke="#9a9a9a" stroke-width="1.300"/></svg>
<svg class="r" style="left:1157px;top:157.8px;" width="17" height="17" viewBox="0 0 17 17"><path d="M2.300 0H16.400L14 13.500 7 16 0 13.200 .5 10.300H3.200L2.900 11.400 7 13 11.400 11.400 12 8H1L1.500 4.700H12.700L13 3.300H1.800z" fill="#42a5f5"/></svg>
<div class="t " style="left:1183px;top:156.10px;height:22px;line-height:22px;font-size:16px;color:#b0b0b0;letter-spacing:-0.325px;">index.wxss</div>
<svg class="r" style="left:1263px;top:160px;" width="10" height="14" viewBox="0 0 10 14"><path d="M2.500 2L7.500 7 2.500 12" fill="none" stroke="#b0b0b0" stroke-width="1.300"/></svg>
<svg class="r" style="left:1279px;top:157px;" width="20" height="20" viewBox="0 0 20 20"><path d="M6 6.500h4v9h4.500M10 6.500h3" fill="none" stroke="#cc8c2e" stroke-width="1.500"/><rect x="-2.300" y="-2.300" width="4.600" height="4.600" transform="translate(4.800 6.500) rotate(45)" fill="none" stroke="#cc8c2e" stroke-width="1.500"/><rect x="-2" y="-2" width="4" height="4" transform="translate(15.500 6.500) rotate(45)" fill="none" stroke="#cc8c2e" stroke-width="1.500"/><rect x="-2" y="-2" width="4" height="4" transform="translate(16.500 15.500) rotate(45)" fill="none" stroke="#cc8c2e" stroke-width="1.500"/></svg>
<div class="t " style="left:1305px;top:156.10px;height:22px;line-height:22px;font-size:16px;color:#9a9a9a;letter-spacing:0.098px;">.listItem</div>
<div class="r" style="left:876px;top:180px;width:1044px;height:5px;background:transparent;background:linear-gradient(rgba(0,0,0,.35),rgba(0,0,0,0));"></div>
<div class="r" style="left:964px;top:630px;width:956px;height:30px;background:#4a4a4a;"></div>
<div class="r" style="left:1037.5px;top:450px;width:9.3px;height:30px;background:#353c36;border:1px solid #7a7a7a;box-sizing:border-box;"></div>
<div class="r" style="left:964px;top:630px;width:9.3px;height:30px;background:#434a44;border:1px solid #8a8a8a;box-sizing:border-box;"></div>
<div class="r" style="left:964px;top:180px;width:1px;height:120px;background:#4a4a4a;"></div>
<div class="r" style="left:964px;top:330px;width:1px;height:90px;background:#4a4a4a;"></div>
<div class="r" style="left:964px;top:480px;width:1px;height:150px;background:#4a4a4a;"></div>
<div class="t m" style="left:964.5px;top:185.5px;width:400px;height:20px;line-height:20px;font-size:14.2px;letter-spacing:-0.381px;white-space:pre;-webkit-text-stroke:.25px;"><span style="position:absolute;left:16.28px;top:0;color:#f0a45a">display</span><span style="position:absolute;left:73.26px;top:0;color:#6cb6ff">:</span><span style="position:absolute;left:89.54px;top:0;color:#f47067">flex</span><span style="position:absolute;left:122.10px;top:0;color:#6cb6ff">;</span></div>
<div class="t" style="left:891px;width:40px;text-align:right;top:184.5px;height:20px;line-height:20px;font-size:14.600px;letter-spacing:-.45px;color:#525252;">12</div>
<div class="t m" style="left:964.5px;top:215.5px;width:400px;height:20px;line-height:20px;font-size:14.2px;letter-spacing:-0.381px;white-space:pre;-webkit-text-stroke:.25px;"><span style="position:absolute;left:16.28px;top:0;color:#f0a45a">flex-direction</span><span style="position:absolute;left:130.24px;top:0;color:#6cb6ff">:</span><span style="position:absolute;left:146.52px;top:0;color:#f47067">row</span><span style="position:absolute;left:170.94px;top:0;color:#6cb6ff">;</span></div>
<div class="t" style="left:891px;width:40px;text-align:right;top:214.5px;height:20px;line-height:20px;font-size:14.600px;letter-spacing:-.45px;color:#525252;">13</div>
<div class="t m" style="left:964.5px;top:245.5px;width:400px;height:20px;line-height:20px;font-size:14.2px;letter-spacing:-0.381px;white-space:pre;-webkit-text-stroke:.25px;"><span style="position:absolute;left:16.28px;top:0;color:#f0a45a">border</span><span style="position:absolute;left:65.12px;top:0;color:#6cb6ff">:</span><span style="position:absolute;left:81.40px;top:0;color:#f47067">1</span><span style="position:absolute;left:89.54px;top:0;color:#dcdcdc">rpx</span><span style="position:absolute;left:122.10px;top:0;color:#f47067">solid</span><span style="position:absolute;left:174.94px;top:4.300px;width:11.800px;height:11.800px;background:#c0c0c0;border:.5px solid #ddd;box-sizing:border-box"></span><span style="position:absolute;left:190.44px;top:0;color:#f47067">silver</span><span style="position:absolute;left:239.28px;top:0;color:#6cb6ff">;</span></div>
<div class="t" style="left:891px;width:40px;text-align:right;top:244.5px;height:20px;line-height:20px;font-size:14.600px;letter-spacing:-.45px;color:#525252;">14</div>
<div class="t m" style="left:964.5px;top:275.5px;width:400px;height:20px;line-height:20px;font-size:14.2px;letter-spacing:-0.381px;white-space:pre;-webkit-text-stroke:.25px;"><span style="position:absolute;left:16.28px;top:0;color:#f0a45a">padding</span><span style="position:absolute;left:73.26px;top:0;color:#6cb6ff">:</span><span style="position:absolute;left:89.54px;top:0;color:#f47067">10</span><span style="position:absolute;left:105.82px;top:0;color:#dcdcdc">rpx</span><span style="position:absolute;left:130.24px;top:0;color:#6cb6ff">;</span></div>
<div class="t" style="left:891px;width:40px;text-align:right;top:274.5px;height:20px;line-height:20px;font-size:14.600px;letter-spacing:-.45px;color:#525252;">15</div>
<div class="t m" style="left:964.5px;top:305.5px;width:400px;height:20px;line-height:20px;font-size:14.2px;letter-spacing:-0.381px;white-space:pre;-webkit-text-stroke:.25px;"><span style="position:absolute;left:0.00px;top:0;color:#f5d000">}</span><span style="position:absolute;left:8.14px;top:0;color:#6cb6ff">image</span><span style="position:absolute;left:48.84px;top:0;color:#f5d000">{</span></div>
<div class="t" style="left:891px;width:40px;text-align:right;top:304.5px;height:20px;line-height:20px;font-size:14.600px;letter-spacing:-.45px;color:#525252;">16</div>
<div class="t m" style="left:964.5px;top:335.5px;width:400px;height:20px;line-height:20px;font-size:14.2px;letter-spacing:-0.381px;white-space:pre;-webkit-text-stroke:.25px;"><span style="position:absolute;left:16.28px;top:0;color:#f0a45a">width</span><span style="position:absolute;left:56.98px;top:0;color:#6cb6ff">:</span><span style="position:absolute;left:73.26px;top:0;color:#f47067">80</span><span style="position:absolute;left:89.54px;top:0;color:#dcdcdc">rpx</span><span style="position:absolute;left:113.96px;top:0;color:#6cb6ff">;</span></div>
<div class="t" style="left:891px;width:40px;text-align:right;top:334.5px;height:20px;line-height:20px;font-size:14.600px;letter-spacing:-.45px;color:#525252;">17</div>
<div class="t m" style="left:964.5px;top:365.5px;width:400px;height:20px;line-height:20px;font-size:14.2px;letter-spacing:-0.381px;white-space:pre;-webkit-text-stroke:.25px;"><span style="position:absolute;left:16.28px;top:0;color:#f0a45a">height</span><span style="position:absolute;left:65.12px;top:0;color:#6cb6ff">:</span><span style="position:absolute;left:81.40px;top:0;color:#f47067">80</span><span style="position:absolute;left:97.68px;top:0;color:#dcdcdc">rpx</span><span style="position:absolute;left:122.10px;top:0;color:#6cb6ff">;</span></div>
<div class="t" style="left:891px;width:40px;text-align:right;top:364.5px;height:20px;line-height:20px;font-size:14.600px;letter-spacing:-.45px;color:#525252;">18</div>
<div class="t m" style="left:964.5px;top:395.5px;width:400px;height:20px;line-height:20px;font-size:14.2px;letter-spacing:-0.381px;white-space:pre;-webkit-text-stroke:.25px;"><span style="position:absolute;left:16.28px;top:0;color:#f0a45a">margin</span><span style="position:absolute;left:65.12px;top:0;color:#6cb6ff">:</span><span style="position:absolute;left:81.40px;top:0;color:#f47067">0</span><span style="position:absolute;left:97.68px;top:0;color:#f47067">15</span><span style="position:absolute;left:113.96px;top:0;color:#dcdcdc">rpx</span><span style="position:absolute;left:138.38px;top:0;color:#6cb6ff">;</span></div>
<div class="t" style="left:891px;width:40px;text-align:right;top:394.5px;height:20px;line-height:20px;font-size:14.600px;letter-spacing:-.45px;color:#525252;">19</div>
<div class="t m" style="left:964.5px;top:425.5px;width:400px;height:20px;line-height:20px;font-size:14.2px;letter-spacing:-0.381px;white-space:pre;-webkit-text-stroke:.25px;"><span style="position:absolute;left:0.00px;top:0;color:#f5d000">}</span></div>
<div class="t" style="left:891px;width:40px;text-align:right;top:424.5px;height:20px;line-height:20px;font-size:14.600px;letter-spacing:-.45px;color:#525252;">20</div>
<div class="t m" style="left:964.5px;top:455.5px;width:400px;height:20px;line-height:20px;font-size:14.2px;letter-spacing:-0.381px;white-space:pre;-webkit-text-stroke:.25px;"><span style="position:absolute;left:0.00px;top:0;color:#6cb6ff">.listItem</span><span style="position:absolute;left:73.26px;top:0;color:#f5d000">{</span></div>
<div class="t" style="left:891px;width:40px;text-align:right;top:454.5px;height:20px;line-height:20px;font-size:14.600px;letter-spacing:-.45px;color:#525252;">21</div>
<div class="t m" style="left:964.5px;top:485.5px;width:400px;height:20px;line-height:20px;font-size:14.2px;letter-spacing:-0.381px;white-space:pre;-webkit-text-stroke:.25px;"><span style="position:absolute;left:16.28px;top:0;color:#f0a45a">display</span><span style="position:absolute;left:73.26px;top:0;color:#6cb6ff">:</span><span style="position:absolute;left:89.54px;top:0;color:#f47067">flex</span><span style="position:absolute;left:122.10px;top:0;color:#6cb6ff">;</span></div>
<div class="t" style="left:891px;width:40px;text-align:right;top:484.5px;height:20px;line-height:20px;font-size:14.600px;letter-spacing:-.45px;color:#525252;">22</div>
<div class="t m" style="left:964.5px;top:515.5px;width:400px;height:20px;line-height:20px;font-size:14.2px;letter-spacing:-0.381px;white-space:pre;-webkit-text-stroke:.25px;"><span style="position:absolute;left:16.28px;top:0;color:#f0a45a">flex-direction</span><span style="position:absolute;left:130.24px;top:0;color:#6cb6ff">:</span><span style="position:absolute;left:146.52px;top:0;color:#f47067">row</span><span style="position:absolute;left:170.94px;top:0;color:#6cb6ff">;</span></div>
<div class="t" style="left:891px;width:40px;text-align:right;top:514.5px;height:20px;line-height:20px;font-size:14.600px;letter-spacing:-.45px;color:#525252;">23</div>
<div class="t m" style="left:964.5px;top:545.5px;width:400px;height:20px;line-height:20px;font-size:14.2px;letter-spacing:-0.381px;white-space:pre;-webkit-text-stroke:.25px;"><span style="position:absolute;left:16.28px;top:0;color:#f0a45a">align-items</span><span style="position:absolute;left:105.82px;top:0;color:#6cb6ff">:</span><span style="position:absolute;left:122.10px;top:0;color:#f47067">center</span><span style="position:absolute;left:170.94px;top:0;color:#6cb6ff">;</span></div>
<div class="t" style="left:891px;width:40px;text-align:right;top:544.5px;height:20px;line-height:20px;font-size:14.600px;letter-spacing:-.45px;color:#525252;">24</div>
<div class="t m" style="left:964.5px;top:575.5px;width:400px;height:20px;line-height:20px;font-size:14.2px;letter-spacing:-0.381px;white-space:pre;-webkit-text-stroke:.25px;"><span style="position:absolute;left:16.28px;top:0;color:#f0a45a">border</span><span style="position:absolute;left:65.12px;top:0;color:#6cb6ff">:</span><span style="position:absolute;left:81.40px;top:0;color:#f47067">1</span><span style="position:absolute;left:89.54px;top:0;color:#dcdcdc">rpx</span><span style="position:absolute;left:122.10px;top:0;color:#f47067">solid</span><span style="position:absolute;left:174.94px;top:4.300px;width:11.800px;height:11.800px;background:#c0c0c0;border:.5px solid #ddd;box-sizing:border-box"></span><span style="position:absolute;left:190.44px;top:0;color:#f47067">silver</span><span style="position:absolute;left:239.28px;top:0;color:#6cb6ff">;</span></div>
<div class="t" style="left:891px;width:40px;text-align:right;top:574.5px;height:20px;line-height:20px;font-size:14.600px;letter-spacing:-.45px;color:#525252;">25</div>
<div class="t m" style="left:964.5px;top:605.5px;width:400px;height:20px;line-height:20px;font-size:14.2px;letter-spacing:-0.381px;white-space:pre;-webkit-text-stroke:.25px;"><span style="position:absolute;left:16.28px;top:0;color:#f0a45a">padding</span><span style="position:absolute;left:73.26px;top:0;color:#6cb6ff">:</span><span style="position:absolute;left:89.54px;top:0;color:#f47067">10</span><span style="position:absolute;left:105.82px;top:0;color:#dcdcdc">rpx</span><span style="position:absolute;left:130.24px;top:0;color:#6cb6ff">;</span></div>
<div class="t" style="left:891px;width:40px;text-align:right;top:604.5px;height:20px;line-height:20px;font-size:14.600px;letter-spacing:-.45px;color:#525252;">26</div>
<div class="t m" style="left:964.5px;top:635.5px;width:400px;height:20px;line-height:20px;font-size:14.2px;letter-spacing:-0.381px;white-space:pre;-webkit-text-stroke:.25px;"><span style="position:absolute;left:0.00px;top:0;color:#f5d000">}</span></div>
<div class="t" style="left:891px;width:40px;text-align:right;top:634.5px;height:20px;line-height:20px;font-size:14.600px;letter-spacing:-.45px;color:#d0d0d0;">27</div>
<svg class="r" style="left:940px;top:304.5px;" width="16" height="12" viewBox="0 0 16 12"><path d="M2 3l6 6 6-6" fill="none" stroke="#c8c8c8" stroke-width="1.400"/></svg>
<svg class="r" style="left:940px;top:454.5px;" width="16" height="12" viewBox="0 0 16 12"><path d="M2 3l6 6 6-6" fill="none" stroke="#c8c8c8" stroke-width="1.400"/></svg>
<div class="r" style="left:1902px;top:180px;width:1px;height:510px;background:#444;"></div>
<div class="r" style="left:1906px;top:417px;width:7px;height:11px;background:#a0a0a0;"></div>
<div class="r" style="left:1902px;top:487.5px;width:18px;height:1.5px;background:#8a8a8a;"></div>
<div class="r" style="left:1906px;top:489px;width:7px;height:11px;background:#a0a0a0;"></div>
<div class="r" style="left:876px;top:690px;width:1044px;height:1px;background:#484848;"></div>
<div class="t " style="left:901px;top:700.00px;height:20px;line-height:20px;font-size:14px;color:#9a9a9a;">调试器</div>
<div class="r" style="left:952.6px;top:698.2px;width:22.6px;height:22.6px;background:#4d4d4d;border-radius:50%;"></div>
<div class="t c" style="left:963.8px;top:699.50px;height:20px;line-height:20px;font-size:14px;color:#f0f0f0;">1</div>
<div class="t " style="left:1000px;top:700.00px;height:20px;line-height:20px;font-size:14px;color:#f0f0f0;">问题</div>
<div class="r" style="left:1000px;top:725.8px;width:28px;height:1.2px;background:#e0e0e0;"></div>
<div class="t " style="left:1052px;top:700.00px;height:20px;line-height:20px;font-size:14px;color:#9a9a9a;">输出</div>
<div class="t " style="left:1104px;top:700.00px;height:20px;line-height:20px;font-size:14px;color:#9a9a9a;">终端</div>
<div class="r" style="left:1276px;top:698.5px;width:500px;height:29px;background:#3c3c3c;"></div>
<div class="t " style="left:1280px;top:703.00px;height:21px;line-height:21px;font-size:15px;color:#868686;letter-spacing:.14px;">筛选器，例如: text、**/*.ts、!**/node_modules/**</div>
<svg class="r" style="left:1746px;top:702px;" width="22" height="22" viewBox="0 0 22 22"><path d="M3.500 4.500h15l-5.700 7v6.500h-3.600v-6.500z" fill="none" stroke="#d0d0d0" stroke-width="1.500" stroke-linejoin="round"/></svg>
<svg class="r" style="left:1795px;top:702px;" width="22" height="22" viewBox="0 0 22 22"><path d="M3 5h16M3 11h11M3 17h7" stroke="#c8c8c8" stroke-width="1.500"/><path d="M13.500 18.500h5L16 15z" fill="#c8c8c8"/></svg>
<svg class="r" style="left:1836px;top:702px;" width="22" height="22" viewBox="0 0 22 22"><path d="M4.500 13.500l6.500-6.500 6.500 6.500" fill="none" stroke="#d0d0d0" stroke-width="1.500"/></svg>
<svg class="r" style="left:1876px;top:702px;" width="22" height="22" viewBox="0 0 22 22"><path d="M5.500 5.500l10 10M15.500 5.500l-10 10" stroke="#d0d0d0" stroke-width="1.500"/></svg>
<div class="t " style="left:901px;top:731.50px;height:23px;line-height:23px;font-size:16.2px;color:#cfcfcf;">目前尚未在工作区检测到问题。</div>
<div class="t " style="left:10px;top:1002.60px;height:20px;line-height:20px;font-size:14.5px;color:#b4b4b4;">页面路径</div>
<svg class="r" style="left:74px;top:1010px;" width="10" height="8" viewBox="0 0 10 8"><path d="M1.500 2h7L5 6.500z" fill="#b0b0b0"/></svg>
<div class="r" style="left:94px;top:1004px;width:1px;height:18px;background:#505050;"></div>
<div class="t " style="left:104px;top:1002.10px;height:21px;line-height:21px;font-size:15px;color:#b4b4b4;letter-spacing:0.063px;">pages/index/index</div>
<svg class="r" style="left:234px;top:1004.5px;" width="18" height="18" viewBox="0 0 18 18"><rect x="4.500" y="5.500" width="10.500" height="10.500" rx="1.500" fill="none" stroke="#9a9a9a" stroke-width="1.300"/><path d="M2 12.500v-8.500a1.500 1.500 0 0 1 1.500-1.500h8.500" fill="none" stroke="#9a9a9a" stroke-width="1.300"/></svg>
<svg class="r" style="left:554px;top:1005px;" width="22" height="18" viewBox="0 0 22 18"><path d="M1.500 9c2.600-4 6-5.600 9.500-5.600s6.900 1.600 9.500 5.600c-2.600 4-6 5.600-9.500 5.600S4.100 13 1.500 9z" fill="none" stroke="#a8a8a8" stroke-width="1.300"/><circle cx="11" cy="9" r="3" fill="none" stroke="#a8a8a8" stroke-width="1.300"/></svg>
<div class="r" style="left:597.3px;top:1012.3px;width:2.4px;height:2.4px;background:#b8b8b8;border-radius:1px;"></div>
<div class="r" style="left:603.8px;top:1012.3px;width:2.4px;height:2.4px;background:#b8b8b8;border-radius:1px;"></div>
<div class="r" style="left:610.3px;top:1012.3px;width:2.4px;height:2.4px;background:#b8b8b8;border-radius:1px;"></div>
<svg class="r" style="left:645px;top:1004px;" width="18" height="18" viewBox="0 0 18 18"><circle cx="9" cy="9" r="7" fill="none" stroke="#b8b8b8" stroke-width="1.200"/><path d="M6 6l6 6M12 6l-6 6" stroke="#b8b8b8" stroke-width="1.200"/></svg>
<div class="t " style="left:666px;top:1001.30px;height:21px;line-height:21px;font-size:15px;color:#b4b4b4;">0</div>
<svg class="r" style="left:679px;top:1003px;" width="20" height="19" viewBox="0 0 20 19"><path d="M10 2.500L18 16.500H2z" fill="none" stroke="#b8b8b8" stroke-width="1.200" stroke-linejoin="round"/><path d="M10 7.500v5M10 13.700v1.500" stroke="#b8b8b8" stroke-width="1.200"/></svg>
<div class="t " style="left:700px;top:1001.30px;height:21px;line-height:21px;font-size:15px;color:#b4b4b4;">0</div>
<div class="t " style="left:1557px;top:1001.30px;height:21px;line-height:21px;font-size:15px;color:#b4b4b4;">行 27，列 2</div>
<div class="t " style="left:1654px;top:1001.30px;height:21px;line-height:21px;font-size:15px;color:#b4b4b4;">空格: 2</div>
<div class="t " style="left:1720px;top:1001.30px;height:21px;line-height:21px;font-size:15px;color:#b4b4b4;letter-spacing:-0.499px;">UTF-8</div>
<div class="t " style="left:1779px;top:1001.30px;height:21px;line-height:21px;font-size:15px;color:#b4b4b4;letter-spacing:-1.543px;">CRLF</div>
<div class="t " style="left:1832px;top:1001.30px;height:21px;line-height:21px;font-size:15px;color:#b4b4b4;letter-spacing:-1.948px;">CSS</div>
<svg class="r" style="left:1880px;top:1003px;" width="20" height="20" viewBox="0 0 20 20"><path d="M10 2.500c-3.300 0-5 2.500-5 5.500v4.500l-1.500 2.500h13l-1.500-2.500v-4.500c0-3-1.700-5.500-5-5.500z" fill="none" stroke="#e8e8e8" stroke-width="1.500" stroke-linejoin="round"/><path d="M8.800 16.500a1.200 1.200 0 0 0 2.400 0z" fill="#e8e8e8"/></svg>
</body></html>
